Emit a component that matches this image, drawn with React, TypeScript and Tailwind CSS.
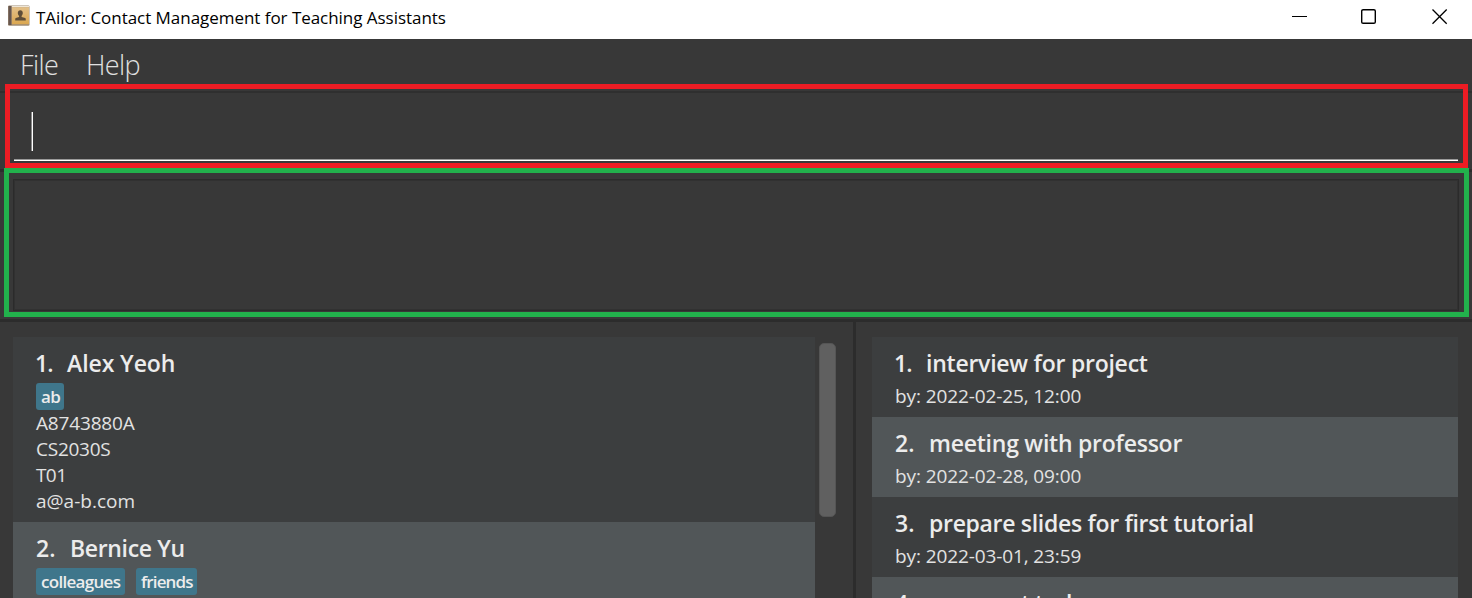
import type { ReactNode } from 'react';

type RowProps = { index: string; title: string; titleClass: string; numberClass: string };

function Heading({ index, title, titleClass, numberClass }: RowProps) {
  return (
    <div className="flex h-7 items-center text-[23px] leading-7 font-semibold whitespace-nowrap text-[#ececec]">
      <span className={`shrink-0 ${numberClass}`}>{index}.</span>
      <span className={titleClass}>{title}</span>
    </div>
  );
}

function Tag({ children, className }: { children: ReactNode; className: string }) {
  return (
    <span className={`flex h-[27px] items-center rounded-[3px] bg-[#3f768b] pl-[5px] text-[17px] leading-[27px] font-semibold whitespace-nowrap text-[#ececec] ${className}`}>
      {children}
    </span>
  );
}

const detail = 'h-[26px] text-[19px] leading-[26px] whitespace-nowrap text-[#e2e2e2]';

const tasks = [
  { title: 'interview for project', due: '2022-02-25, 12:00', number: 'w-[31px] tracking-[-1px] -indent-px', spacing: 'tracking-[-0.24px]', row: 'bg-[#3c3e3f]' },
  { title: 'meeting with professor', due: '2022-02-28, 09:00', number: 'w-[34px]', spacing: 'tracking-[-0.24px]', row: 'bg-[#515658]' },
  { title: 'prepare slides for first tutorial', due: '2022-03-01, 23:59', number: 'w-[34px]', spacing: 'tracking-[-0.31px]', row: 'bg-[#3c3e3f]' },
  { title: 'an urgent task', due: '2022-03-03, 12:00', number: 'w-[33px]', spacing: 'tracking-[-0.75px]', row: 'bg-[#515658]' },
];

function AppIcon() {
  return (
    <svg width="22" height="22" viewBox="0 0 22 22" className="shrink-0">
      <defs>
        <linearGradient id="cover" x1="0" y1="0" x2="0" y2="1">
          <stop offset="0" stopColor="#e3c089" />
          <stop offset="1" stopColor="#dba750" />
        </linearGradient>
      </defs>
      <rect x="0" y="0.5" width="21.5" height="20.2" rx="1.2" fill="#a08d76" />
      <rect x="0.5" y="1" width="3" height="19" fill="#66564e" />
      <rect x="3.8" y="1" width="17.2" height="1.2" fill="#efe6d6" />
      <rect x="3.8" y="2.2" width="17.2" height="17" fill="url(#cover)" />
      <path d="M12.3 5.3c1.6 0 2.5 1.1 2.5 2.8 0 1.2-.5 2.2-1.2 2.8v1l3.6 1.2c.5.3.6.8.6 2.4H7.2c0-1.6.1-2.1.6-2.4l3.3-1.2v-1c-.8-.6-1.3-1.6-1.3-2.8 0-1.7 1-2.8 2.5-2.8z" fill="#5d4d38" />
    </svg>
  );
}

export default function App() {
  return (
    <div className="relative flex h-[598px] w-[1472px] flex-col overflow-hidden bg-[#383838] font-['Open_Sans',sans-serif]">
      <header className="flex h-[39px] shrink-0 items-start bg-white pl-2">
        <div className="flex items-start pt-[5px]">
          <AppIcon />
          <h1 className="ml-[6px] text-[17px] leading-[26px] tracking-[-0.04px] whitespace-nowrap text-black">
            TAilor: Contact Management for Teaching Assistants
          </h1>
        </div>
        <svg width="156" height="16" viewBox="0 0 156 16" className="mt-[9px] mr-6 ml-auto" fill="none" stroke="#000">
          <path d="M0 7.5h15" strokeWidth="1" />
          <rect x="69.7" y="0.7" width="13.6" height="13.6" rx="1.4" strokeWidth="1.4" />
          <path d="M140.5 0.5l14.2 14.2M154.7 0.5l-14.2 14.2" strokeWidth="1.3" />
        </svg>
      </header>

      <nav className="flex h-[54px] shrink-0 items-center border-b-2 border-[#2f2f2f] pt-px pl-5 text-[27px] font-light text-[#e0e0e0]">
        <span className="w-[66px] tracking-[-0.6px]">File</span>
        <span className="tracking-[-0.6px]">Help</span>
      </nav>

      <section className="flex h-[76px] shrink-0 px-[14px] pb-2">
        <div className="flex w-full border-b border-white pt-[19px] pl-[17px] shadow-[inset_0_-1px_0_#9a9a9a]">
          <span className="h-[39px] w-[2px] border-r border-white bg-[#8a8a8a]" />
        </div>
      </section>

      <section className="h-[153px] shrink-0 border-y-[3px] border-[#2c2c2c] px-[13px] pt-[7px] pb-[8px]">
        <div className="h-[132px] border border-[#2b2b2b] bg-[#383838] shadow-[inset_0_0_0_1px_#313131]" />
      </section>

      <main className="flex min-h-0 flex-1">
        <section className="flex w-[853px] shrink-0 pt-[15px] pl-[13px]">
          <div className="w-[802px] shrink-0">
            <article className="h-[185px] bg-[#3c3e3f] pt-3 pl-[23px]">
              <Heading index="1" title="Alex Yeoh" titleClass="tracking-[-0.08px]" numberClass="w-[31px] tracking-[-1px] -indent-px" />
              <div className="mt-[6px] flex">
                <Tag className="w-7 tracking-[-0.6px]">ab</Tag>
              </div>
              <div className={`${detail} tracking-[-0.16px]`}>A8743880A</div>
              <div className={`${detail} tracking-[-0.25px]`}>CS2030S</div>
              <div className={`${detail} tracking-[-0.6px]`}>T01</div>
              <div className={detail}>a@a-b.com</div>
            </article>
            <article className="h-[185px] bg-[#515658] pt-3 pl-[23px]">
              <Heading index="2" title="Bernice Yu" titleClass="tracking-[-0.34px]" numberClass="w-[34px]" />
              <div className="mt-[6px] flex gap-[11px]">
                <Tag className="w-[89px] tracking-[-0.7px]">colleagues</Tag>
                <Tag className="w-[61px] tracking-[-0.85px]">friends</Tag>
              </div>
            </article>
          </div>
          <div className="mt-[6px] ml-1 h-[174px] w-[17px] rounded-[5px] border border-[#555555] bg-[#606060]" />
        </section>

        <div className="w-[3px] shrink-0 bg-[#2c2c2c]" />

        <section className="w-[602px] shrink-0 pt-[15px] pl-4">
          {tasks.map((task, i) => (
            <article key={task.title} className={`h-20 pt-3 pl-[23px] ${task.row}`}>
              <Heading index={String(i + 1)} title={task.title} titleClass={task.spacing} numberClass={task.number} />
              <div className={`mt-[6px] tracking-[-0.11px] ${detail}`}>by: {task.due}</div>
            </article>
          ))}
        </section>
      </main>

      <div className="absolute top-[84px] left-[5px] h-[84px] w-[1463px] border-[5px] border-[#ed1c24]" />
      <div className="absolute top-[168px] left-1 h-[149px] w-[1465px] border-[5px] border-[#22b14c]" />
    </div>
  );
}
